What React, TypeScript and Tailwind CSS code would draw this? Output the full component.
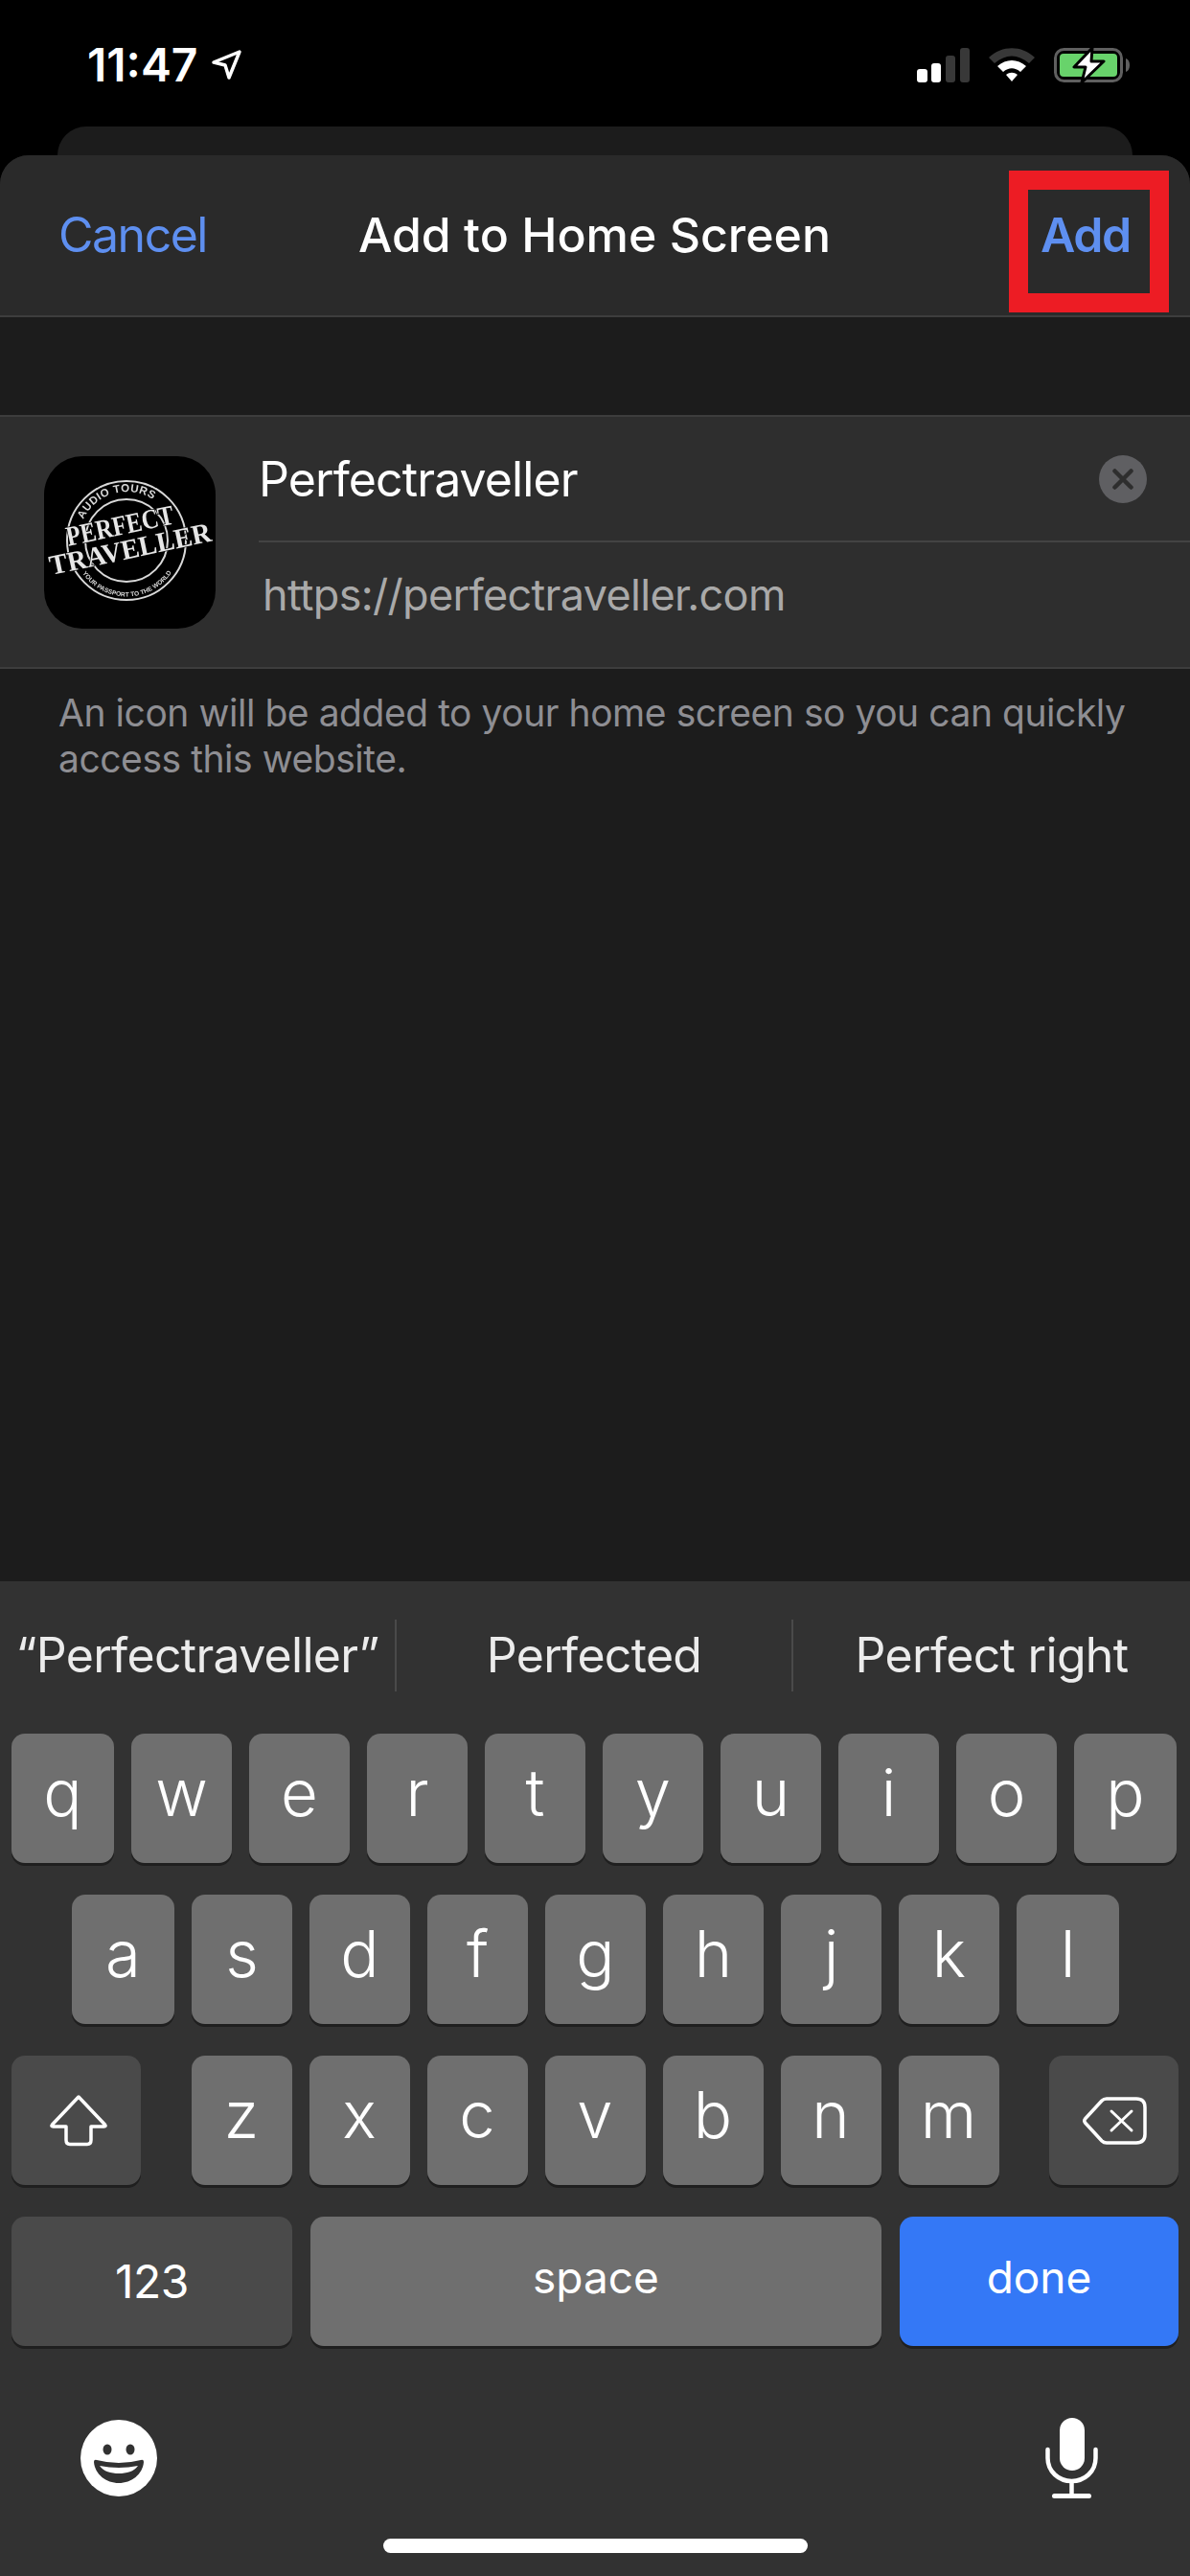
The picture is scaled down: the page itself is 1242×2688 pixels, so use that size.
const font = "font-['Inter','Liberation_Sans',sans-serif]";

const rowOne = ["q", "w", "e", "r", "t", "y", "u", "i", "o", "p"];
const rowTwo = ["a", "s", "d", "f", "g", "h", "j", "k", "l"];
const rowThree = ["z", "x", "c", "v", "b", "n", "m"];

function LetterKey({ label, wide }: { label: string; wide?: boolean }) {
  return (
    <div className={`${wide ? "w-[107px]" : "w-[105px]"} h-[135px] rounded-[14px] bg-[#6f6f6f] shadow-[0_3px_0_#1f1f1f] flex items-center justify-center text-white text-[67px] font-light pb-[10px]`}>
      {label}
    </div>
  );
}

function StatusIcons() {
  return (
    <div className="flex items-center">
      <svg width="56" height="36" viewBox="0 0 56 36" className="ml-[957px]">
        <rect x="0" y="22" width="11" height="14" rx="3" fill="#fff" />
        <rect x="15" y="16" width="10" height="20" rx="3" fill="#fff" />
        <rect x="30" y="8" width="10" height="28" rx="3" fill="#383838" />
        <rect x="45" y="0" width="10" height="36" rx="3" fill="#383838" />
      </svg>
      <svg width="48" height="36" viewBox="0 0 48 36" className="ml-[19px]">
        <path d="M0 10 C14 -3 34 -3 48 10 L42 16 C30 6 18 6 6 16 Z" fill="#383838" />
        <path d="M9 19 C18 11 30 11 39 19 L33 25 C27 20 21 20 15 25 Z" fill="#fff" />
        <path d="M18 28 C22 25 26 25 30 28 L24 35 Z" fill="#fff" />
      </svg>
      <svg width="80" height="38" viewBox="0 0 80 38" className="ml-[20px]">
        <rect x="1.5" y="2.5" width="69" height="33" rx="9" fill="none" stroke="#5f5f5f" strokeWidth="3" />
        <rect x="6" y="7" width="60" height="24" rx="4" fill="#68d36b" />
        <path d="M75 12 C78 13 79 16 79 19 C79 22 78 25 75 26 Z" fill="#5f5f5f" />
        <path d="M40 1 L21 21 H33 L29 37 L52 15 H39 Z" fill="#fff" stroke="#000" strokeWidth="3" strokeLinejoin="round" />
      </svg>
    </div>
  );
}

function AppLogo() {
  return (
    <svg width="179" height="180" viewBox="0 0 179 180" className="shrink-0">
      <defs>
        <path id="topArc" d="M41 66 A50 50 0 0 1 120 50" />
        <path id="bottomArc" d="M40 122 A56 56 0 0 0 142 96" />
      </defs>
      <rect width="179" height="180" rx="40" fill="#000" />
      <g className="blur-[0.4px]">
        <g fill="none" stroke="#d9d9d9">
          <circle cx="86" cy="88" r="62" strokeWidth="2" />
          <circle cx="86" cy="88" r="43" strokeWidth="2" />
        </g>
        <text fontFamily="'Liberation Sans',sans-serif" fontSize="11.5" fontWeight="700" fill="#d9d9d9" letterSpacing="0.5">
          <textPath href="#topArc">AUDIO TOURS</textPath>
        </text>
        <text fontFamily="'Liberation Sans',sans-serif" fontSize="6.6" fontWeight="700" fill="#d9d9d9">
          <textPath href="#bottomArc">YOUR PASSPORT TO THE WORLD</textPath>
        </text>
        <g transform="rotate(-12 86 88)" fontFamily="'Liberation Serif',serif" fontWeight="700" fill="#e6e6e6" stroke="#000" strokeWidth="1.5" paintOrder="stroke" textAnchor="middle" fontSize="29">
          <text x="82.5" y="81" textLength="114" lengthAdjust="spacingAndGlyphs">PERFECT</text>
          <text x="88" y="107" textLength="172" lengthAdjust="spacingAndGlyphs">TRAVELLER</text>
        </g>
      </g>
    </svg>
  );
}

export default function App() {
  return (
    <div className={`${font} relative w-[1242px] h-[2688px] bg-black flex flex-col overflow-hidden`}>
      <div className="h-[132px] shrink-0 pt-[46px] flex items-start">
        <div className="w-[91px]" />
        <span className="text-white text-[48px] leading-[44px] font-semibold">11:47</span>
        <svg width="34" height="36" viewBox="0 0 34 36" className="ml-[13px] mt-[4px]">
          <path d="M30 4 L3 15 L15 18 L19 31 Z" fill="none" stroke="#fff" strokeWidth="3.5" strokeLinejoin="round" />
        </svg>
        <div className="absolute left-0 top-[49px]">
          <StatusIcons />
        </div>
      </div>

      <div className="h-[30px] shrink-0 mx-[60px] bg-[#1c1c1c] rounded-t-[30px]" />

      <div className="flex-1 flex flex-col bg-[#1c1c1c] rounded-t-[30px] overflow-hidden">
        <div className="h-[169px] shrink-0 bg-[#2a2a2a] border-b-[2px] border-[#3d3d3d] grid grid-cols-[1fr_auto_1fr] items-center pl-[61px] pr-[62px] text-[50px]">
          <span className="text-[#5e8ff0] justify-self-start tracking-[-1.5px]">Cancel</span>
          <span className="text-white font-medium">Add to Home Screen</span>
          <span className="text-[#5e8ff0] font-semibold justify-self-end tracking-[-1.3px]">Add</span>
        </div>

        <div className="h-[102px] shrink-0" />

        <div className="h-[265px] shrink-0 bg-[#2e2e2e] border-y-[2px] border-[#3d3d3d] flex items-center pl-[46px]">
          <AppLogo />
          <div className="flex-1 ml-[45px] flex flex-col">
            <div className="h-[120px] border-b-[2px] border-[#434343] flex items-center justify-between pr-[45px] pb-[9px]">
              <span className="text-white text-[50px] tracking-[-0.9px]">Perfectraveller</span>
              <div className="w-[50px] h-[50px] rounded-full bg-[#5f5f62] flex items-center justify-center">
                <svg width="24" height="24" viewBox="0 0 24 24">
                  <path d="M3.5 3.5 L20.5 20.5 M20.5 3.5 L3.5 20.5" stroke="#2e2e2e" strokeWidth="4.5" strokeLinecap="round" />
                </svg>
              </div>
            </div>
            <div className="h-[120px] flex items-center pb-[10px]">
              <span className="text-[#a9a9a9] text-[45px] ml-[4px] tracking-[-0.7px]">https://perfectraveller.com</span>
            </div>
          </div>
        </div>

        <p className="pl-[61px] pr-[60px] pt-[22px] text-[#8e8e93] text-[39px] leading-[48px] tracking-[-0.45px]">
          An icon will be added to your home screen so you can quickly access this website.
        </p>

        <div className="flex-1" />

        <div className="h-[1038px] shrink-0 bg-[#323232] flex flex-col">
          <div className="h-[159px] shrink-0 flex items-center text-[#ececec] text-[50px] tracking-[-0.7px] pb-[4px]">
            <div className="w-[412px] h-[75px] flex items-center justify-center whitespace-nowrap">“Perfectraveller”</div>
            <div className="w-[2px] h-[75px] bg-[#4a4a4a]" />
            <div className="w-[412px] h-[75px] flex items-center justify-center">Perfected</div>
            <div className="w-[2px] h-[75px] bg-[#4a4a4a]" />
            <div className="flex-1 h-[75px] flex items-center justify-center">Perfect right</div>
          </div>

          <div className="flex gap-[18px] pl-[12px]">
            {rowOne.map((k, i) => <LetterKey key={k} label={k} wide={i === 0 || i === 9} />)}
          </div>
          <div className="flex gap-[18px] pl-[75px] mt-[33px]">
            {rowTwo.map((k, i) => <LetterKey key={k} label={k} wide={i === 0 || i === 8} />)}
          </div>
          <div className="flex items-start justify-between px-[12px] mt-[33px]">
            <div className="w-[135px] h-[135px] rounded-[14px] bg-[#4a4a4a] shadow-[0_3px_0_#1f1f1f] flex items-center justify-center pl-[5px]">
              <svg width="62" height="54" viewBox="0 0 62 54">
                <path d="M31 2 L3.5 31 Q2 33 4.5 33 H18 V47 Q18 51.5 22 51.5 H40 Q44 51.5 44 47 V33 H57.5 Q60 33 58.5 31 Z" fill="none" stroke="#fff" strokeWidth="3.5" strokeLinejoin="round" />
              </svg>
            </div>
            <div className="flex gap-[18px]">
              {rowThree.map((k) => <LetterKey key={k} label={k} />)}
            </div>
            <div className="w-[135px] h-[135px] rounded-[14px] bg-[#4a4a4a] shadow-[0_3px_0_#1f1f1f] flex items-center justify-center">
              <svg width="68" height="50" viewBox="0 0 68 50">
                <path d="M3.5 23 L21 4 Q23 2 26 2 H57 Q66 2 66 11 V39 Q66 48 57 48 H26 Q23 48 21 46 L3.5 27 Q2 25 3.5 23 Z" fill="none" stroke="#fff" strokeWidth="3.5" strokeLinejoin="round" />
                <path d="M31 15 L52 35 M52 15 L31 35" stroke="#fff" strokeWidth="3" strokeLinecap="round" />
              </svg>
            </div>
          </div>
          <div className="flex justify-between px-[12px] mt-[33px] text-white">
            <div className="w-[293px] h-[135px] rounded-[14px] bg-[#4a4a4a] shadow-[0_3px_0_#1f1f1f] flex items-center justify-center text-[48px] tracking-[-0.5px]">123</div>
            <div className="w-[596px] h-[135px] rounded-[14px] bg-[#6f6f6f] shadow-[0_3px_0_#1f1f1f] flex items-center justify-center text-[46px] pb-[8px]">space</div>
            <div className="w-[291px] h-[135px] rounded-[14px] bg-[#3478f6] shadow-[0_3px_0_#1f1f1f] flex items-center justify-center text-[46px] pb-[8px]">done</div>
          </div>

          <div className="flex justify-between items-center pl-[84px] pr-[95px] mt-[75px]">
            <svg width="80" height="80" viewBox="0 0 80 80">
              <circle cx="40" cy="40" r="40" fill="#fff" />
              <ellipse cx="28" cy="31" rx="4.5" ry="5.5" fill="#323232" />
              <ellipse cx="52" cy="31" rx="4.5" ry="5.5" fill="#323232" />
              <path d="M14 44 Q14 41 17 42 Q40 48 63 42 Q66 41 66 44 C65 57 53 66 40 66 C27 66 15 57 14 44 Z" fill="#323232" />
              <path d="M20 48 Q40 52 60 48 C56 54 48 56 40 56 C32 56 24 54 20 48 Z" fill="#fff" />
            </svg>
            <svg width="56" height="84" viewBox="0 0 56 84">
              <rect x="15" y="0" width="26" height="55" rx="13" fill="#fff" />
              <path d="M2.5 33 V42 C2.5 56 14 66 27.5 66 C41 66 52.5 56 52.5 42 V33" fill="none" stroke="#fff" strokeWidth="4.5" strokeLinecap="round" />
              <path d="M27.5 66 V80" stroke="#fff" strokeWidth="4.5" />
              <rect x="7" y="79" width="41" height="5" rx="2.5" fill="#fff" />
            </svg>
          </div>

          <div className="mx-auto mt-[42px] w-[443px] h-[15px] rounded-full bg-white" />
        </div>
      </div>

      <div className="absolute left-[1053px] top-[178px] w-[167px] h-[148px] border-[20px] border-[#ed1c24]" />
    </div>
  );
}
